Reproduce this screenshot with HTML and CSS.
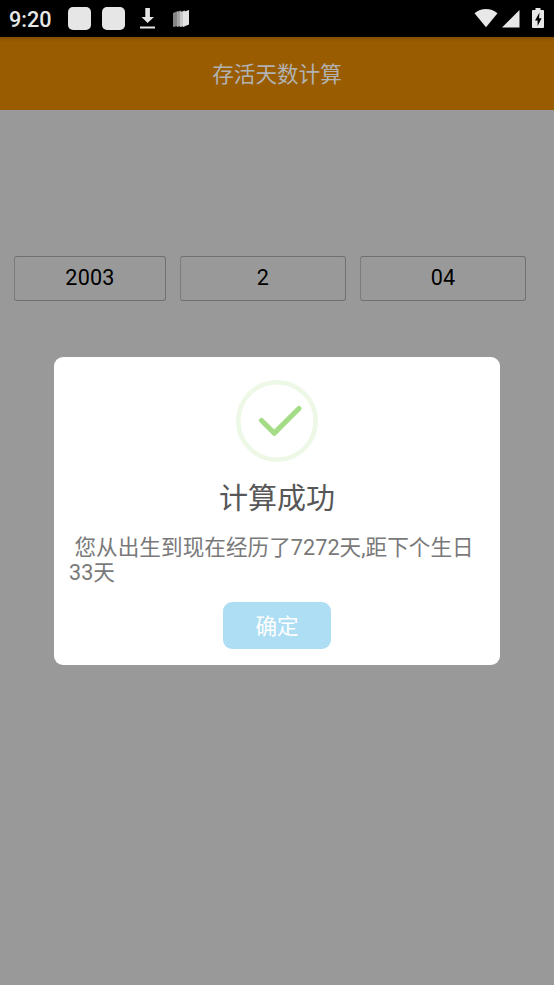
FILE: index.html
```html
<!DOCTYPE html>
<html lang="zh-CN">
<head>
<meta charset="utf-8">
<title>存活天数计算</title>
<link rel="stylesheet" href="styles.css">
</head>
<body>
<div class="screen">
  <div class="status">
    <span class="clock">9:20</span>
    <span class="tile"></span>
    <span class="tile"></span>
    <svg class="download" width="16" height="22" viewBox="0 0 16 22"><path d="M5.300 0h4.600v9H14L7.600 15 1.500 9h3.800zM0 18.600h15v2H0z" fill="#e6e6e6"/></svg>
    <svg class="map" width="17" height="18" viewBox="0 0 17 18"><path d="M0 3l5-2v15l-5 1z" fill="#858585"/><path d="M4 2l4-1.400v15.400L4 17z" fill="#a5a5a5"/><path d="M7 2L12 .5v15.500l-5 1z" fill="#c8c8c8"/><path d="M10 2L16 0v14.500l-6 2.500z" fill="#e3e3e3"/></svg>
    <svg class="signals" width="72" height="22" viewBox="0 0 72 22">
      <path d="M.5 5.300C7-.6 17-.6 23.500 5.300L12 19.200z" fill="#e8e8e8"/>
      <path d="M45.500 2v17.600H28z" fill="#e8e8e8"/>
      <path d="M61.500 0h5v2H69a1 1 0 0 1 1 1v16a1 1 0 0 1-1 1H59a1 1 0 0 1-1-1V3a1 1 0 0 1 1-1h2.500z" fill="#e8e8e8"/>
      <path d="M65.500 4.500l-4.500 8h2.600v5.500l4-7.800H65z" fill="#000"/>
    </svg>
  </div>
  <header class="bar">存活天数计算</header>
  <main class="fields">
    <div class="field">2003</div>
    <div class="field">2</div>
    <div class="field">04</div>
  </main>
  <section class="dialog">
    <svg class="check" width="82" height="82" viewBox="0 0 82 82" fill="none">
      <circle cx="41" cy="41" r="38.700" stroke="#edf8e7" stroke-width="4.600"/>
      <path d="M25.500 40.500L38.300 53.200 63 28.500" stroke="#a5dc86" stroke-width="5.200" stroke-linecap="round" stroke-linejoin="round"/>
    </svg>
    <h1 class="title">计算成功</h1>
    <p class="message"> 您从出生到现在经历了7272天,距下个生日33天</p>
    <button class="ok">确定</button>
  </section>
</div>
</body>
</html>
```
FILE: styles.css
```css
* { box-sizing: border-box; }

body {
  margin: 0;
  font-family: Roboto, "Noto Sans CJK SC", sans-serif;
}

.screen {
  position: relative;
  height: 985px;
  overflow: hidden;
  background: #999;
}

.status {
  display: flex;
  align-items: center;
  height: 37px;
  padding: 0 8px 0 9px;
  background: #000;
}

.clock {
  width: 43px;
  margin: 2px 16px 0 0;
  color: #e8e8e8;
  font-size: 21.6px;
  font-weight: 500;
  line-height: 35px;
}

.tile {
  width: 23px;
  height: 23px;
  margin-right: 11px;
  border-radius: 5px;
  background: #e6e6e6;
}

.download { margin-left: 4px; }
.map { margin-left: 17px; }
.signals { margin-left: auto; }

.bar {
  height: 73px;
  padding-top: 1px;
  background: linear-gradient(#854f00, #995c00 5px);
  color: #b2b2b2;
  font-size: 21.6px;
  line-height: 73px;
  text-align: center;
}

.fields {
  display: grid;
  grid-template-columns: 152px 166px 166px;
  column-gap: 14px;
  padding: 146px 14px 0;
}

.field {
  height: 45px;
  border: 1px solid #707070;
  border-left-color: #7c7c7c;
  border-radius: 3px;
  color: #000;
  font-size: 21.6px;
  letter-spacing: 0.2px;
  line-height: 42px;
  text-align: center;
}

.dialog {
  position: absolute;
  top: 357px;
  left: 54px;
  display: flex;
  flex-direction: column;
  align-items: center;
  width: 446px;
  height: 308px;
  padding: 23px 15px 0;
  border-radius: 9px;
  background: #fff;
}

.title {
  margin: 16px 0 0;
  color: #575757;
  font-size: 29px;
  font-weight: 400;
  line-height: 42px;
}

.message {
  align-self: stretch;
  margin: 15px 0 0;
  color: #797979;
  font-size: 21.6px;
  letter-spacing: 0.05px;
  line-height: 25px;
  white-space: pre-wrap;
}

.ok {
  width: 108px;
  height: 47px;
  margin-top: 17px;
  padding: 1px 0 0;
  border: 0;
  border-radius: 9px;
  background: #aedef4;
  color: #fff;
  font: inherit;
  font-size: 21.6px;
  line-height: 48px;
}
```
